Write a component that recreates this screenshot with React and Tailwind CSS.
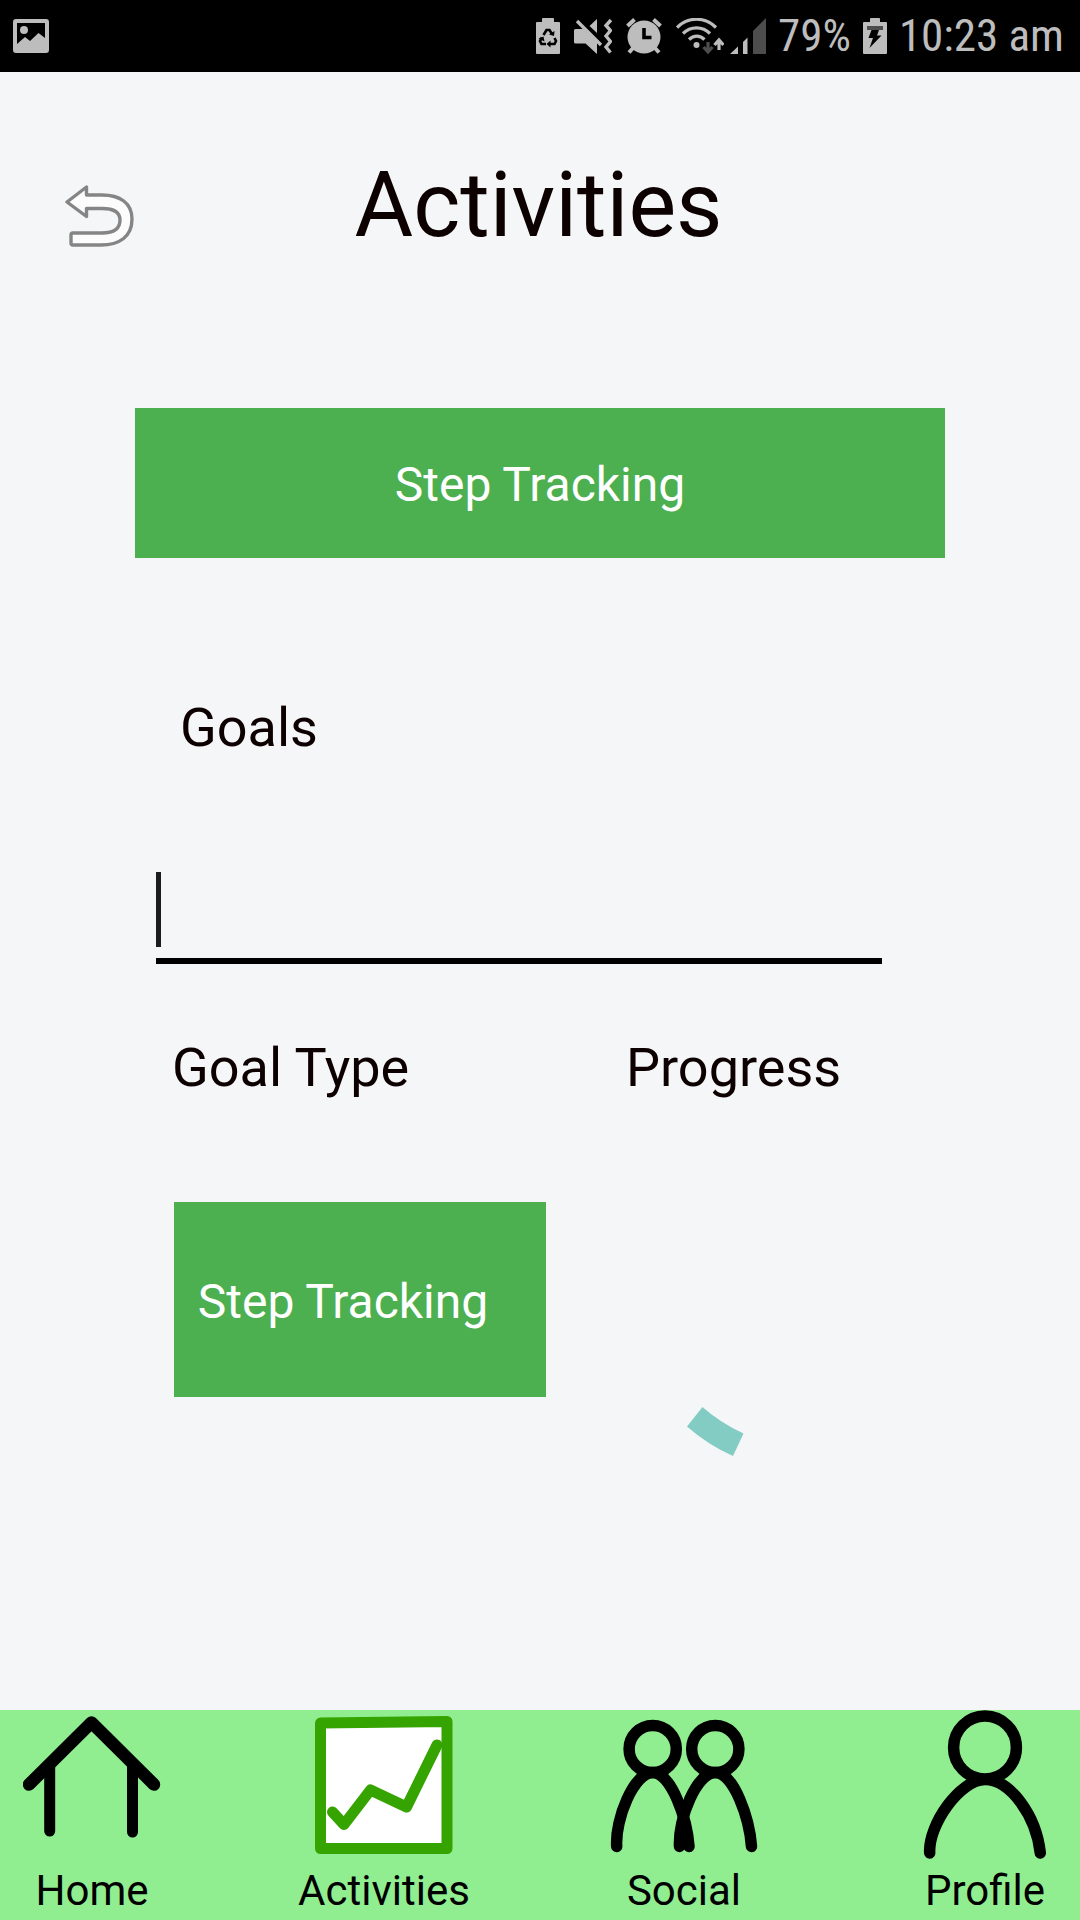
const grey = "#bdbdbd";

function PictureIcon() {
  return (
    <svg width="36" height="34" viewBox="0 0 36 34" aria-hidden="true">
      <path fill={grey} fillRule="evenodd" d="M3 0h30a3 3 0 0 1 3 3v28a3 3 0 0 1-3 3H3a3 3 0 0 1-3-3V3a3 3 0 0 1 3-3zM4 4v21l8-7 5 4 8.500-8 6.500 5V4z" />
      <circle cx="11" cy="11" r="4" fill={grey} />
    </svg>
  );
}

function RecycleBatteryIcon() {
  return (
    <svg width="24" height="36" viewBox="0 0 24 36" aria-hidden="true">
      <path fill={grey} d="M7 0h10a1 1 0 0 1 1 1v3h5a1 1 0 0 1 1 1v30a1 1 0 0 1-1 1H1a1 1 0 0 1-1-1V5a1 1 0 0 1 1-1h5V1a1 1 0 0 1 1-1z" />
      <g fill="none" stroke="#000" strokeWidth="2.600">
        <path d="M7.500 17l3-5h3l2.500 4" />
        <path d="M18.500 20l1.500 3-1.500 3H13" />
        <path d="M10 26H5.500L4 23l2-3.500" />
      </g>
      <path d="M13 16.500l5 1.500.5-5zM14.500 22.500v7l-4-3.500zM2.500 20.500l5-2 1 5z" fill="#000" />
    </svg>
  );
}

function MuteVibrateIcon() {
  return (
    <svg width="38" height="36" viewBox="0 0 38 36" aria-hidden="true">
      <path fill={grey} d="M1.500 11h8L23 24v12L11.500 25.500h-10A1.500 1.500 0 0 1 0 24V12.500A1.500 1.500 0 0 1 1.500 11zM23 1v14l-7.500-7z" />
      <path d="M5 1l24 24" stroke="#000" strokeWidth="3" />
      <path d="M3 3l24 24" stroke={grey} strokeWidth="3.400" />
      <path d="M37 2l-5 5.500 4.500 5-4.500 5.500 4.500 5.500-4.500 5.500 4.500 5.500" fill="none" stroke={grey} strokeWidth="3.400" />
    </svg>
  );
}

function AlarmIcon() {
  return (
    <svg width="36" height="36" viewBox="0 0 36 36" aria-hidden="true">
      <circle cx="18" cy="19" r="16.500" fill={grey} />
      <path d="M1.500 8l7-6.500M34.500 8l-7-6.500M7 30l-4 4.500M29 30l4 4.500" stroke={grey} strokeWidth="4" />
      <path d="M18 10v9.500h7.500" fill="none" stroke="#000" strokeWidth="3.600" />
    </svg>
  );
}

function WifiIcon() {
  return (
    <svg width="48" height="36" viewBox="0 0 48 36" aria-hidden="true">
      <g fill="none" stroke={grey} strokeWidth="3.200">
        <path d="M1 9.500C12-1.500 29-1.500 40 9.500" />
        <path d="M7 15.500c7.500-7.500 19.500-7.500 27 0" />
        <path d="M13 21.500c4.500-4.500 11-4.500 15.500 0" />
      </g>
      <circle cx="20.500" cy="27" r="3" fill={grey} />
      <path d="M32 24v10m-4.500-5l4.500 5 4.500-5" fill="none" stroke="#4d4d4d" strokeWidth="3.200" />
      <path d="M43 32V22m-4.500 5l4.500-5 4.500 5" fill="none" stroke={grey} strokeWidth="3.200" />
    </svg>
  );
}

function SignalIcon() {
  return (
    <svg width="36" height="36" viewBox="0 0 36 36" aria-hidden="true">
      <path fill={grey} d="M0 36l8-7.500V36zM13 24l4.500-4.500V36H13z" />
      <path fill="#4d4d4d" d="M23 13L36 0v36H23z" />
    </svg>
  );
}

function ChargingIcon() {
  return (
    <svg width="24" height="36" viewBox="0 0 24 36" aria-hidden="true">
      <path fill={grey} d="M8 0h8a1 1 0 0 1 1 1v3h6a1 1 0 0 1 1 1v30a1 1 0 0 1-1 1H1a1 1 0 0 1-1-1V5a1 1 0 0 1 1-1h6V1a1 1 0 0 1 1-1z" />
      <path fill="#4d4d4d" d="M4 8h16v4H4z" />
      <path d="M8.500 12H16l-2 5.500h4.500L6.500 30l3.500-10H5.500z" fill="#000" />
    </svg>
  );
}

function BackIcon() {
  return (
    <svg width="70" height="62" viewBox="0 0 70 62" aria-hidden="true">
      <path
        d="M2 17L21.500 2v8H37c18 0 30 8 30 24 0 18-13 26-31 26H8q-2 0-2-2V50q0-2 2-2H37c11 0 18-4 18-13 0-8-7-11.500-18-11.500H21.500v8z"
        fill="#fcfcfc" stroke="#858585" strokeWidth="3.400" strokeLinejoin="round"
      />
    </svg>
  );
}

function HomeIcon() {
  return (
    <svg width="138" height="122" viewBox="0 0 138 122" fill="none" stroke="#000" strokeWidth="11" strokeLinecap="round" strokeLinejoin="round" aria-hidden="true">
      <path d="M6 68.500L68.500 6.500 131 68.500" strokeWidth="12.500" />
      <path d="M26.700 49v66M109.500 49v67" />
    </svg>
  );
}

function ActivitiesIcon() {
  return (
    <svg width="138" height="138" viewBox="0 0 138 138" fill="none" stroke="#35a300" strokeWidth="11" strokeLinejoin="round" aria-hidden="true">
      <path d="M5.500 7L132 5.500v127H5.500z" fill="#fff" />
      <path d="M17.500 96L29 108.500 55.500 74 91.500 91 122 29" strokeLinecap="round" />
    </svg>
  );
}

function SocialIcon() {
  return (
    <svg width="148" height="134" viewBox="0 0 148 134" fill="none" stroke="#000" strokeWidth="11.500" strokeLinecap="round" aria-hidden="true">
      <circle cx="42.700" cy="30" r="23.600" />
      <circle cx="105.300" cy="30" r="23.600" />
      <path d="M6.700 127.500C5 100 24 53.500 42.700 53.500S77 100 79 127.500" />
      <path d="M69.500 127.500C68 100 86.500 53.500 105.300 53.500S139.500 100 141.500 127.500" />
    </svg>
  );
}

function ProfileIcon() {
  return (
    <svg width="124" height="149" viewBox="0 0 124 149" fill="none" stroke="#000" strokeWidth="11.500" strokeLinecap="round" aria-hidden="true">
      <circle cx="62" cy="37.500" r="31.400" />
      <path d="M6.700 143C5 115 37 69.500 62 69.500S113 105 117.300 143" />
    </svg>
  );
}

function NavItem({ label, active, className, children }) {
  return (
    <a href={"#" + label.toLowerCase()} aria-current={active ? "page" : undefined} className={"flex flex-col items-center justify-between " + (className || "")}>
      {children}
      <span className="text-[42px] leading-[58px]">{label}</span>
    </a>
  );
}

export default function App() {
  return (
    <div className="flex min-h-screen flex-col bg-[#f5f6f8] font-['Roboto',sans-serif] text-[#0d0000]">
      <div className="flex h-[72px] items-center justify-between bg-black pr-4 pl-[13px] font-['Roboto_Condensed','Roboto',sans-serif] text-[45px] leading-[72px] text-[#bdbdbd]">
        <PictureIcon />
        <div className="flex items-center">
          <div className="mr-3 flex items-center gap-[14px]">
            <RecycleBatteryIcon />
            <MuteVibrateIcon />
            <AlarmIcon />
            <div className="flex gap-[6px]">
              <WifiIcon />
              <SignalIcon />
            </div>
          </div>
          <span className="mr-3">79%</span>
          <ChargingIcon />
          <span className="ml-3">10:23 am</span>
        </div>
      </div>

      <header className="grid grid-cols-[1fr_auto_1fr] items-center pt-[78px] pr-[68px] pl-[65px]">
        <button type="button" aria-label="Back" className="mt-5 justify-self-start">
          <BackIcon />
        </button>
        <h1 className="text-[90px] leading-[112px]">Activities</h1>
      </header>

      <main className="flex flex-1 flex-col">
        <button type="button" className="mx-auto mt-[146px] h-[150px] w-3/4 bg-[#4caf50] pt-1 text-[48px] text-white">
          Step Tracking
        </button>

        <label htmlFor="goal" className="mt-[138px] ml-[180px] self-start text-[54px] leading-[64px]">
          Goals
        </label>
        <div className="mt-[112px] mr-[198px] ml-[156px] flex h-[92px] items-start border-b-[6px] border-black">
          <span className="h-[75px] w-[5px] bg-[#1c1c1c]" aria-hidden="true" />
          <input id="goal" type="text" className="h-[75px] min-w-0 flex-1 bg-transparent text-[54px] outline-none" />
        </div>

        <div className="mt-[72px] grid grid-cols-[1fr_1fr] pl-[172px] text-[54px] leading-[64px]">
          <h2>Goal Type</h2>
          <h2>Progress</h2>
        </div>
        <div className="mt-[102px] grid grid-cols-[1fr_1fr] pl-[174px]">
          <button type="button" className="h-[195px] w-[372px] bg-[#4caf50] pt-1 pr-[34px] text-[48px] text-white">
            Step Tracking
          </button>
          <svg role="progressbar" aria-label="Progress" className="mt-[205px] ml-[60px]" width="58" height="50" viewBox="0 0 58 50">
            <path d="M15.500 0Q32 15 56.500 26.500L46 49Q21 38 0 19.500z" fill="#82ccc4" />
          </svg>
        </div>
      </main>

      <nav className="grid h-[210px] grid-cols-[234fr_300fr_300fr_246fr] bg-[#90ee90] text-black">
        <NavItem label="Home" className="pr-[50px]"><span className="pt-[6px]"><HomeIcon /></span></NavItem>
        <NavItem label="Activities" active><span className="pt-[6px]"><ActivitiesIcon /></span></NavItem>
        <NavItem label="Social"><span className="pt-[9px]"><SocialIcon /></span></NavItem>
        <NavItem label="Profile" className="pl-[56px]"><ProfileIcon /></NavItem>
      </nav>
    </div>
  );
}
